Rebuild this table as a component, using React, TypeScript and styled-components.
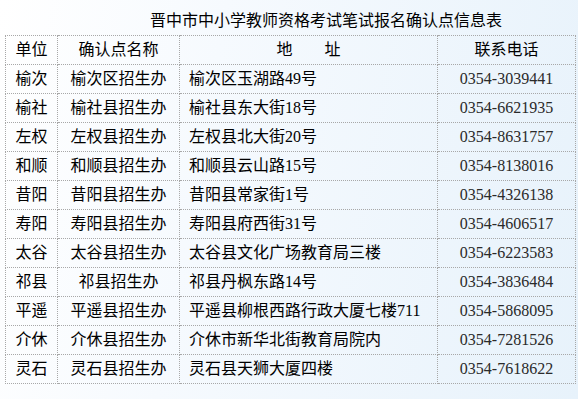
import React from "react"
import styled, { createGlobalStyle } from "styled-components"

type Site = {
  unit: string
  office: string
  address: string
  phone: string
}

const sites: Site[] = [
  { unit: "榆次", office: "榆次区招生办", address: "榆次区玉湖路49号", phone: "0354-3039441" },
  { unit: "榆社", office: "榆社县招生办", address: "榆社县东大街18号", phone: "0354-6621935" },
  { unit: "左权", office: "左权县招生办", address: "左权县北大街20号", phone: "0354-8631757" },
  { unit: "和顺", office: "和顺县招生办", address: "和顺县云山路15号", phone: "0354-8138016" },
  { unit: "昔阳", office: "昔阳县招生办", address: "昔阳县常家街1号", phone: "0354-4326138" },
  { unit: "寿阳", office: "寿阳县招生办", address: "寿阳县府西街31号", phone: "0354-4606517" },
  { unit: "太谷", office: "太谷县招生办", address: "太谷县文化广场教育局三楼", phone: "0354-6223583" },
  { unit: "祁县", office: "祁县招生办", address: "祁县丹枫东路14号", phone: "0354-3836484" },
  { unit: "平遥", office: "平遥县招生办", address: "平遥县柳根西路行政大厦七楼711", phone: "0354-5868095" },
  { unit: "介休", office: "介休县招生办", address: "介休市新华北街教育局院内", phone: "0354-7281526" },
  { unit: "灵石", office: "灵石县招生办", address: "灵石县天狮大厦四楼", phone: "0354-7618622" },
]

const GlobalStyle = createGlobalStyle`
  html, body {
    margin: 0;
    padding: 0;
  }
  body {
    width: 578px;
    height: 399px;
    overflow: hidden;
    background: linear-gradient(100deg, #ffffff 0%, #f6fafe 35%, #e7f2fb 100%);
    font-family: "Liberation Serif", "Noto Sans CJK SC", serif;
    color: #000;
  }
`

const Page = styled.div`
  display: flex;
  flex-direction: column;
  padding-left: 5px;
  width: 578px;
  box-sizing: border-box;
`

const Title = styled.div`
  height: 35px;
  box-sizing: border-box;
  padding: 12px 0 0 145px;
  font-size: 16px;
  line-height: 18px;
  white-space: nowrap;
`

const Table = styled.table`
  border-collapse: collapse;
  table-layout: fixed;
  width: 570px;
  font-size: 16px;
`

const Cell = styled.td<{ $left?: boolean }>`
  height: 29px;
  padding: 0 0 0 ${(p) => (p.$left ? "9px" : "0")};
  box-sizing: border-box;
  border: 1px dotted #a8a8a8;
  text-align: ${(p) => (p.$left ? "left" : "center")};
  vertical-align: middle;
  line-height: 18px;
  white-space: nowrap;
`

const HeadCell = styled(Cell).attrs({ as: "th" })`
  font-weight: normal;
`

const Phone = styled.span`
  color: #2a2a2a;
`

const App = function () {
  return (
    <>
      <GlobalStyle />
      <Page>
        <Title>晋中市中小学教师资格考试笔试报名确认点信息表</Title>
        <Table>
          <colgroup>
            <col style={{ width: 52 }} />
            <col style={{ width: 122 }} />
            <col style={{ width: 258 }} />
            <col style={{ width: 138 }} />
          </colgroup>
          <thead>
            <tr>
              <HeadCell>单位</HeadCell>
              <HeadCell>确认点名称</HeadCell>
              <HeadCell>地　　址</HeadCell>
              <HeadCell>联系电话</HeadCell>
            </tr>
          </thead>
          <tbody>
            {sites.map((site) => (
              <tr key={site.unit}>
                <Cell>{site.unit}</Cell>
                <Cell>{site.office}</Cell>
                <Cell $left>{site.address}</Cell>
                <Cell>
                  <Phone>{site.phone}</Phone>
                </Cell>
              </tr>
            ))}
          </tbody>
        </Table>
      </Page>
    </>
  )
}

export default App
